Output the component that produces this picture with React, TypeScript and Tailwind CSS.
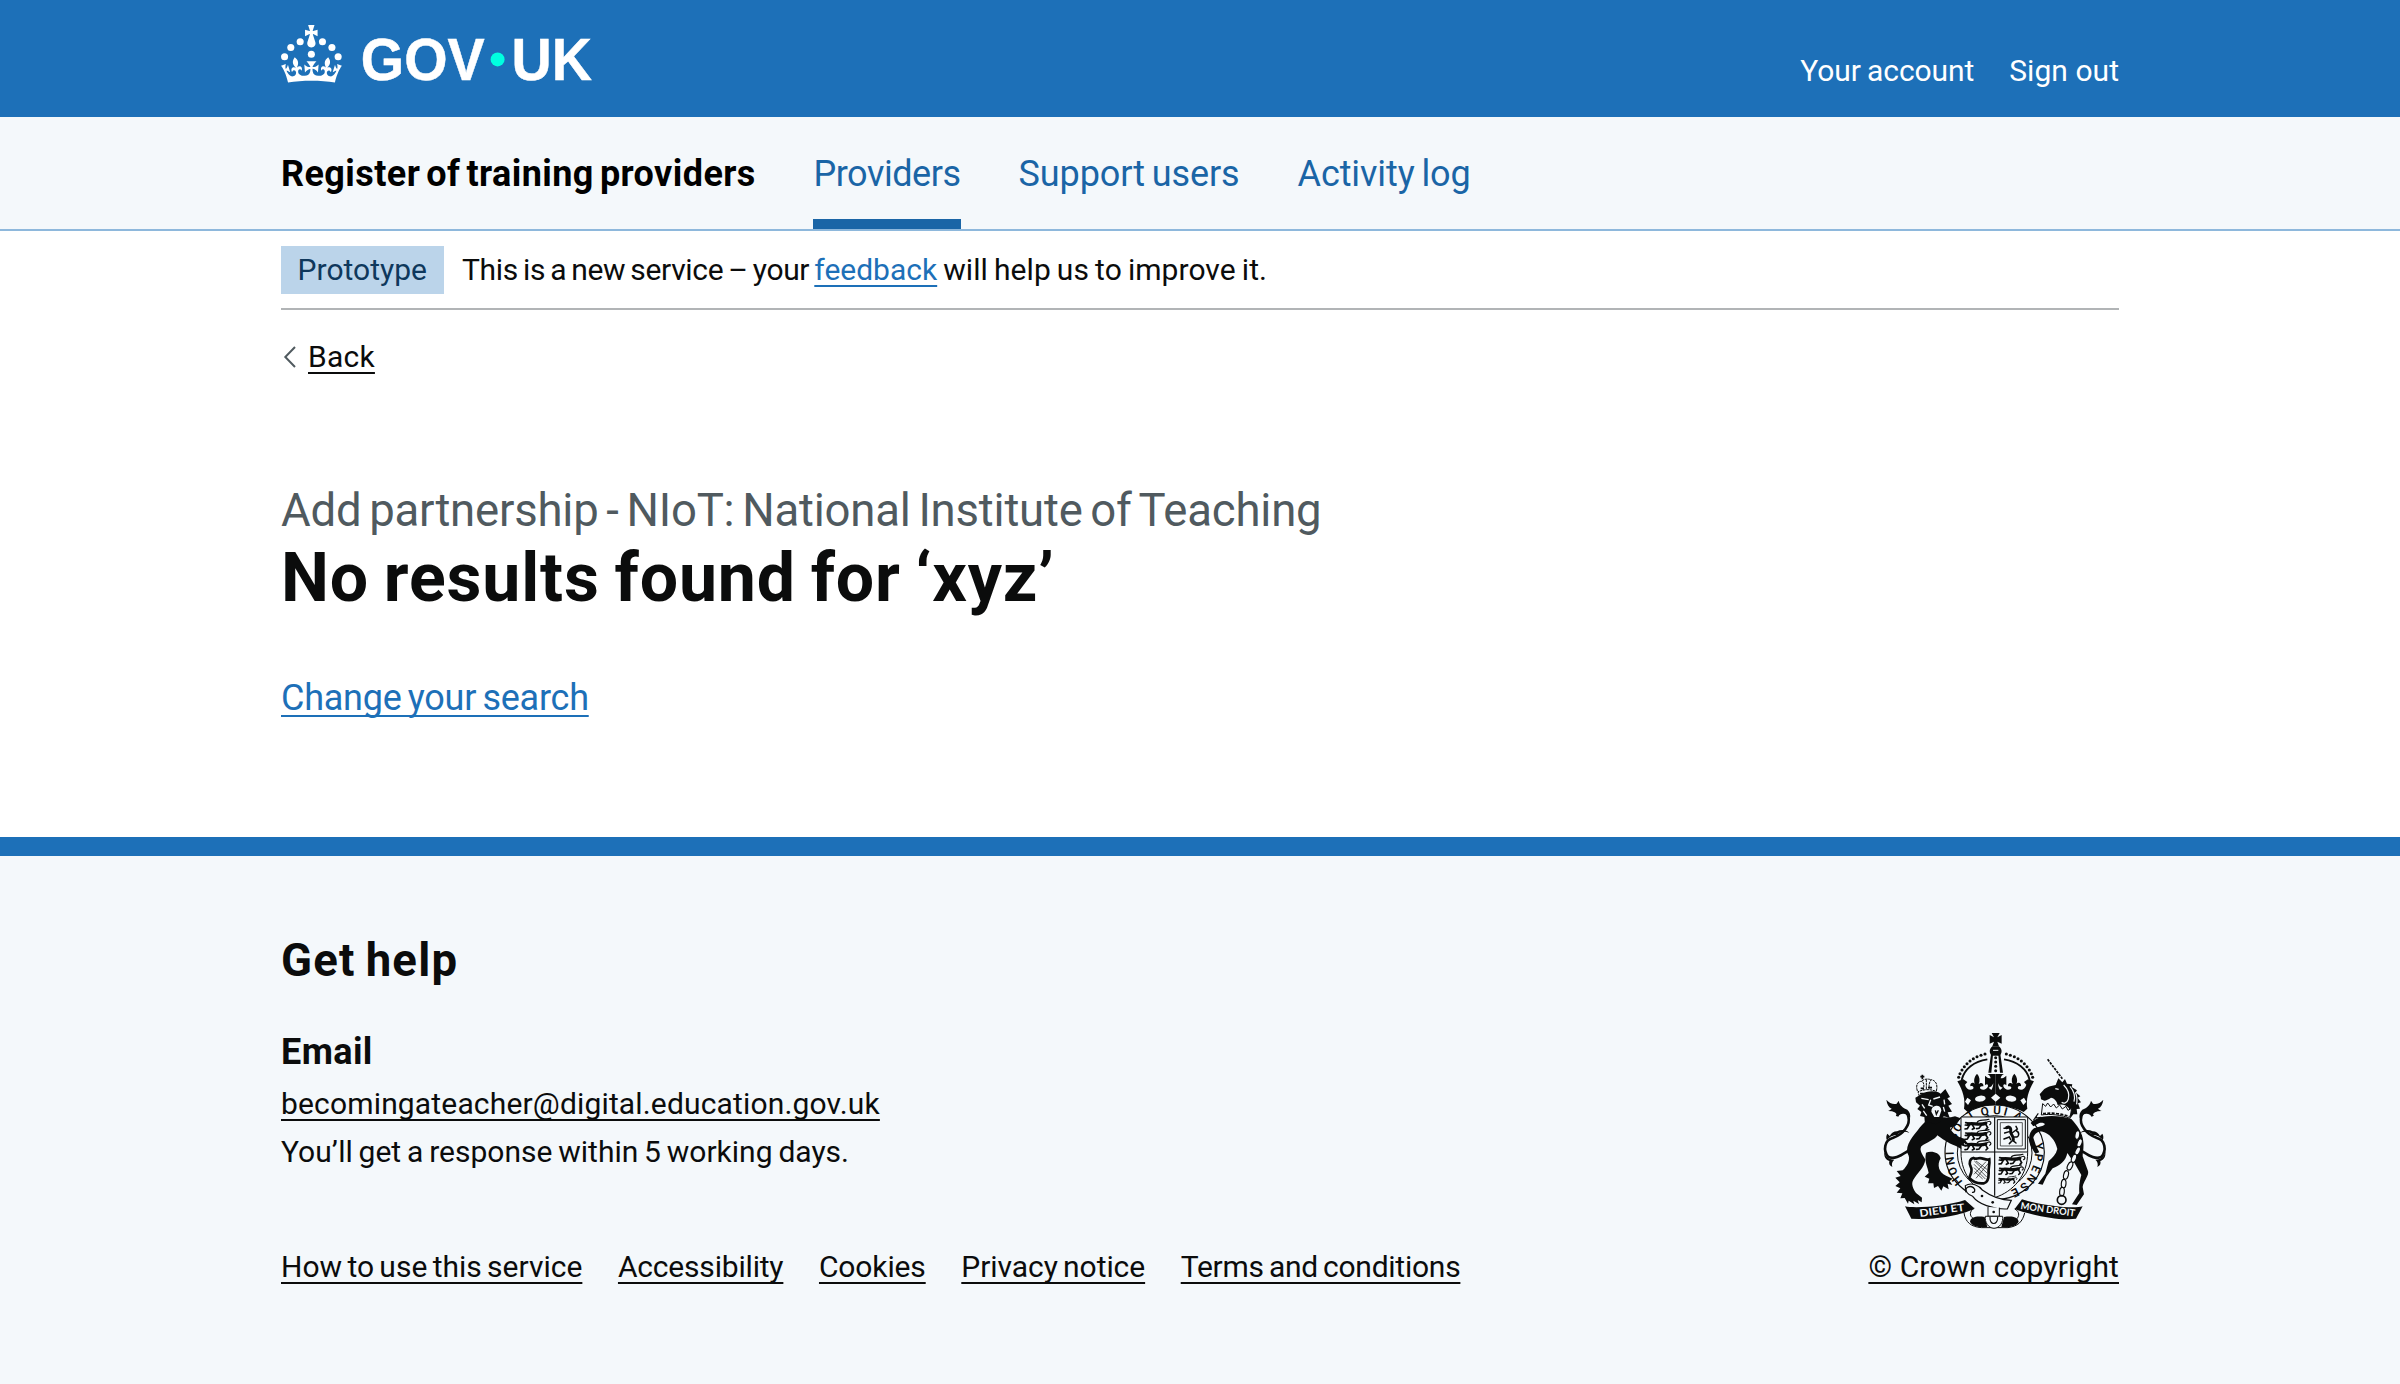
import type { ReactNode } from "react";

function Logo() {
  return (
    <svg viewBox="0 0 324 60" className="h-[57.4px] w-[310px] overflow-visible" fill="#fff" role="img" aria-label="GOV.UK">
      <circle cx="20" cy="17.6" r="3.7" />
      <circle cx="10.2" cy="23.5" r="3.7" />
      <circle cx="3.7" cy="33.2" r="3.7" />
      <circle cx="31.7" cy="30.6" r="3.7" />
      <circle cx="43.3" cy="17.6" r="3.7" />
      <circle cx="53.2" cy="23.5" r="3.7" />
      <circle cx="59.7" cy="33.2" r="3.7" />
      <path d="M33.1,9.8c.2-.1.3-.3.5-.5l4.6,2.4v-6.8l-4.6,1.5c-.1-.2-.3-.3-.5-.5l1.9-5.9h-6.7l1.9,5.9c-.2.1-.3.3-.5.5l-4.6-1.5v6.8l4.6-2.4c.1.2.3.3.5.5l-2.6,8c-.9,2.8,1.2,5.7,4.1,5.7h0c3,0,5.1-2.9,4.1-5.7l-2.6-8ZM37,37.9s-3.4,3.8-4.1,6.1c2.2,0,4.2-.5,6.4-2.8l-.7,8.5c-2-2.8-4.4-4.1-5.7-3.8.1,3.1.5,6.7,5.8,7.2,3.7.3,6.7-1.5,7-3.8.4-2.6-2-4.3-3.7-1.6-1.4-4.5,2.4-6.1,4.9-3.2-1.9-4.5-1.8-7.7,2.4-10.9,3,4,2.6,7.3-1.2,11.1,2.4-1.3,6.2,0,4,4.6-1.2-2.8-3.7-2.2-4.2.2-.3,1.7.7,3.7,3,4.2,1.9.3,4.7-.9,7-5.9-1.3,0-2.4.7-3.9,1.7l2.4-8c.6,2.3,1.4,3.7,2.2,4.5.6-1.6.5-2.8,0-5.3l5,1.8c-2.6,3.6-5.2,8.7-7.3,17.5-7.4-1.1-15.7-1.7-24.5-1.7h0c-8.8,0-17.1.6-24.5,1.7-2.1-8.9-4.7-13.9-7.3-17.5l5-1.8c-.5,2.5-.6,3.7,0,5.3.8-.8,1.6-2.3,2.2-4.5l2.4,8c-1.5-1-2.6-1.7-3.9-1.7,2.3,5,5.2,6.2,7,5.9,2.3-.4,3.3-2.4,3-4.2-.5-2.4-3-3.1-4.2-.2-2.2-4.6,1.6-6,4-4.6-3.7-3.7-4.2-7.1-1.2-11.1,4.2,3.2,4.3,6.4,2.4,10.9,2.5-2.8,6.3-1.3,4.9,3.2-1.8-2.7-4.1-1-3.7,1.6.3,2.3,3.3,4.1,7,3.8,5.4-.5,5.7-4.2,5.8-7.2-1.3-.2-3.7,1-5.7,3.8l-.7-8.5c2.2,2.3,4.2,2.7,6.4,2.8-.7-2.3-4.1-6.1-4.1-6.1h10.6,0Z" />
      <g stroke="#fff" strokeWidth="0.5" fontSize="62.2" fontWeight="700" fontFamily="Liberation Sans, sans-serif">
        <text x="83.4" y="57.7" textLength="129.5" lengthAdjust="spacingAndGlyphs">GOV</text>
        <text x="241" y="57.7" textLength="84" lengthAdjust="spacingAndGlyphs">UK</text>
      </g>
      <circle cx="226.4" cy="36" r="7.3" fill="#00ffe0" />
    </svg>
  );
}

// Letters of the garter motto: glyph, centre x, centre y.
const garter: [string, number, number][] = [
  ["H", 291, 516], ["O", 278, 487], ["N", 271, 456], ["I", 269, 433],
  ["S", 279, 382], ["O", 293, 355], ["T", 332, 318], ["Q", 374, 307],
  ["U", 411, 304], ["I", 437, 308], ["A", 474, 322], ["Y", 537, 412],
  ["P", 536, 445], ["E", 528, 480], ["N", 516, 509], ["S", 494, 534], ["E", 466, 551],
];

function Passant({ x, y, s = 1 }: { x: number; y: number; s?: number }) {
  return (
    <g transform={`translate(${x} ${y}) scale(${s})`} fill="none" stroke="#0b0c0c" strokeLinecap="round">
      <path d="M12 10C26 6 44 15 64 8" strokeWidth="10" />
      <path d="M4 6l12 2M3 13l10 1M16 12L9 24l-7 1M24 12l6 11-6 3M52 12l-8 11-7 1M63 9l7 12-5 5" strokeWidth="5" />
      <path d="M66 6C78-4 84 8 76 12M38 6C44-6 56 2 74-4" strokeWidth="3.5" />
    </g>
  );
}

function CrownHalf() {
  return (
    <g>
      {[[375, 135], [363, 139], [351, 143], [340, 149], [330, 156], [321, 164], [313, 173], [306, 183], [300, 194], [296, 205]].map(([x, y]) => (
        <circle key={x} cx={x} cy={y} r="4.6" />
      ))}
      <path d="M382 151C342 157 313 180 305 213" fill="none" stroke="#0b0c0c" strokeWidth="5.5" />
      <path d="M292 217l18-6 12 8-7 8c4 14 14 18 24 13 4-4 0-11-8-8-2-11 9-14 14-6-5-12-2-23 6-32 8 9 10 20 5 32 6-8 16-4 14 6-9-2-13 3-8 8 8 5 18 2 22-8 1-8-5-8-9-3v-29c5 5 10 8 17 8-1-5-4-11-10-13h25v97c-31 0-60 5-84 17l-11-10c5-26-3-54-20-82z" />
      <path d="M386 236c7-1 11-6 14-13-1 9-2 15-6 20z" fill="#f4f8fb" />
    </g>
  );
}

function Tail() {
  return (
    <g>
      <path d="M154 420C132 432 104 456 84 443C69 424 73 393 98 387C130 376 152 348 145 322C139 300 119 304 111 322" fill="none" stroke="#0b0c0c" strokeWidth="8" />
      <path d="M79 272c8 10 22 16 31 12l6-9c2 12 12 22 26 27 8 8 10 16 8 26-10-16-24-18-40-6 2-8-5-12-14-15l-12-1c6-3 9-5 11-7-9-4-14-13-16-27zM148 372c-12-6-30-4-36 6-13-1-26 7-31 16-4-8-2-15 1-20l7 7c5-9 12-14 22-14 12-6 28-5 37 5zM73 428c4 16 12 22 30 24-7 6-9 13-6 22-9-5-11-10-9-18-11-4-17-14-15-28z" />
    </g>
  );
}

function RoyalArms() {
  return (
    <svg viewBox="60 60 690 610" className="h-[203.3px] w-[230px]" fill="#0b0c0c" role="img" aria-label="Royal coat of arms">
      <path d="M395 72h24l-7 13 13-7v26l-13-6 5 14h-20l5-14-13 6V78l13 7z" />
      <path d="M397 112h20c11 9 9 21 2 28h-24c-7-7-9-19 2-28z" />
      <path d="M393 136l-8 55h9l5-54zM421 136l8 55h-9l-5-54z" />
      <path d="M399 124h16" stroke="#f4f8fb" strokeWidth="3" />
      {[146, 159, 172, 185].map((y) => <circle key={y} cx="407" cy={y} r="4.5" />)}
      <CrownHalf />
      <g transform="translate(814 0) scale(-1 1)"><CrownHalf /></g>
      <g fill="#f4f8fb">
        <path d="M407 254l14 12-14 12-14-12zM322 266l11 8-9 14-9-10zM492 266l-11 8 9 14 9-10z" />
        <ellipse cx="361" cy="269" rx="16" ry="9" transform="rotate(-8 361 269)" />
        <ellipse cx="453" cy="269" rx="16" ry="9" transform="rotate(8 453 269)" />
      </g>

      <Tail />
      <g transform="translate(809 0) scale(-1 1)"><Tail /></g>

      <ellipse cx="404" cy="430" rx="149" ry="142" fill="#f4f8fb" stroke="#0b0c0c" strokeWidth="3.5" />
      <ellipse cx="404" cy="432" rx="112" ry="112" fill="none" stroke="#0b0c0c" strokeWidth="3" />
      {garter.map(([ch, x, y], i) => (
        <text
          key={i}
          transform={`translate(${x} ${y}) rotate(${(Math.atan2(y - 430, x - 404) * 180) / Math.PI + 90})`}
          y="12"
          textAnchor="middle"
          fontSize="35"
          fontWeight="600"
          fontFamily="Roboto, sans-serif"
        >
          {ch}
        </text>
      ))}

      <path d="M303 324H503V430C503 500 460 548 404 566C348 548 303 500 303 430Z" fill="#f4f8fb" stroke="#0b0c0c" strokeWidth="3" />
      <path d="M404 324V560M303 429H503" stroke="#0b0c0c" strokeWidth="3.5" />
      <Passant x={313} y={335} />
      <Passant x={313} y={366} />
      <Passant x={313} y={397} />
      <Passant x={415} y={440} />
      <Passant x={415} y={472} s={0.94} />
      <Passant x={414} y={504} s={0.72} />
      <path d="M412 332h84v88h-84z" fill="none" stroke="#0b0c0c" strokeWidth="3" />
      <path d="M421 341h66v70h-66z" fill="none" stroke="#0b0c0c" strokeWidth="2" />
      <g fill="none" stroke="#0b0c0c" strokeLinecap="round">
        <path d="M440 356c10-5 14 4 12 12s10 12 8 24" strokeWidth="9" />
        <path d="M432 358l10 0M434 372l14-4M432 390l16-6 4 8M448 404l10-10 10 8M456 372l16-12-4-8M464 384c16 2 14-14 6-18" strokeWidth="4.5" />
      </g>
      <path d="M340 447c-10 2-14 14-8 26 8 14-2 24-4 34 10 12 26 18 44 16 10-2 14-14 14-30-2-14 4-26 2-42-12 4-20-6-32-3-6 2-10 2-16-1z" fill="none" stroke="#0b0c0c" strokeWidth="8" />
      <path d="M343 456l40 38M342 466l38 38M342 476l34 34M348 456l34 26M344 488l24 22M386 462l-38 46M378 458l-36 38" stroke="#0b0c0c" strokeWidth="2" />

      {/* Lion supporter */}
      <path d="M205 330C240 320 262 330 285 322L302 328 286 350 270 356C275 372 295 385 313 389L322 402 311 403 318 414 303 409 304 420 288 411C262 402 245 388 232 379C226 392 200 400 184 412C176 425 190 440 196 452C192 478 172 490 160 512C152 525 160 540 168 552L186 566 185 580 173 573 177 585 160 575 163 586 146 575 144 584 134 567 121 568 127 553 110 551 121 538 106 531 119 520 106 506 122 501 110 486 128 484C142 470 150 455 146 440C132 420 150 390 172 365C182 352 190 342 205 330Z" />
      <path d="M198 431C215 425 238 430 242 448C230 468 236 490 258 500L278 509 269 516 277 528 263 524 266 541 250 532 244 545 234 531 222 537 220 523 204 523 208 509 194 503 206 492C204 475 192 460 198 431Z" />
      <path d="M166 266l18-10c18-12 44-12 58-2l14-14 14 24-8 4 14 17-11 5 11 18-13 2 6 16-18-4-10 16-14 8-20-6-12 6-2-22-13-3 4-12-12-9 8-10-12-10z" />
      <g fill="none" stroke="#f4f8fb" strokeWidth="4">
        <path d="M184 268l22 4M220 270l20-6M212 272l-6 16 12 4M186 286l8 12M190 306l10 14M252 272l2 14M250 294l4 14" />
        <path d="M216 308c0-18 24-22 26-4l-6 18h-12z" fill="#f4f8fb" />
        <path d="M226 304l3 12 6-12" stroke="#0b0c0c" />
      </g>
      <g fill="none" stroke="#0b0c0c" strokeWidth="3">
        <path d="M178 262l-4-14c22-8 36-8 54-1l-2 12M172 246c-6-18 2-30 14-29 8 6 6 18 3 26M229 246c5-18-1-31-15-34-7 8-8 18-6 28M186 216c4-6 20-8 27-3M199 212v30" strokeDasharray="8 2" />
        <path d="M187 197v14M181 203h12" strokeWidth="5" />
        <path d="M182 238h10M204 236h12M180 254h44" strokeWidth="5" />
      </g>

      {/* Unicorn supporter */}
      <path d="M563 151l44 58" fill="none" stroke="#0b0c0c" strokeWidth="5" strokeDasharray="8 3" />
      <path d="M539 256l14-16c8-6 20-10 34-12l8-20 12 12 8-10 6 14 16 2-2 8 16 10-4 6 14 12-8 4 10 14-9 3 6 16-10 1 2 16-12 0-9 12-4-30c-8-10-20-14-34-10-2-12-10-20-20-22-8 5-14 8-20 9l-10-4-1-8z" />
      <g fill="none" stroke="#f4f8fb" strokeWidth="3.5">
        <path d="M586 239l10 2M611 228c14 14 18 28 14 42s-14 14-20 10M630 232c12 14 16 30 12 46M646 250c6 12 6 22 4 36" />
      </g>
      <path d="M548 284l9 8 6-10 9 12 9-9 8 12 10-9 8 12 11-8 6 12 11-6-5 30c-24-10-60-14-86-10z" fill="#f4f8fb" stroke="#0b0c0c" strokeWidth="3" />
      <path d="M549 314c26-4 56 0 80 9" fill="none" stroke="#0b0c0c" strokeWidth="5" strokeDasharray="9 4" />
      <path d="M549 323C575 318 612 322 634 330C650 348 668 370 670 398C672 420 668 430 668 442L684 486C688 500 670 516 668 534L672 556 650 588 636 586 658 552C656 530 660 512 664 498L640 456C630 444 628 440 622 432C618 456 598 470 578 478L560 502 548 527 534 524 556 494 566 456C578 446 588 436 592 420C586 392 566 372 548 368C534 366 524 374 520 386L528 410 538 430 526 434 512 412C504 390 506 370 522 358L549 350C560 346 552 340 538 342L520 352 512 342C520 332 536 326 549 323Z" />
      <g fill="none" stroke="#0b0c0c" strokeWidth="3.5">
        <path d="M535 313l-10 14 18-2 10 8M530 322l-10 12" />
        {[[652, 378, 10], [659, 402, 20], [653, 426, 25], [642, 448, 20], [630, 471, 25], [618, 498, 15], [611, 524, 5], [606, 548, 5]].map(([x, y, r]) => (
          <ellipse key={y} cx={x} cy={y} rx="7" ry="13" transform={`rotate(${r} ${x} ${y})`} fill="#f4f8fb" />
        ))}
        <circle cx="605" cy="573" r="13" strokeWidth="5" />
      </g>

      {/* Strap, scroll and buckle */}
      <path d="M135 592C165 599 260 592 315 573L343 598C325 614 235 632 176 630L154 629Z" />
      <path d="M668 592C640 601 545 590 486 571L464 600C500 614 575 632 626 631L648 629Z" />
      <path d="M312 612c4 28 22 42 52 44h80c30-4 44-18 50-44M343 598c-16 8-14 24-4 30M464 600c16 8 14 22 6 30" fill="none" stroke="#0b0c0c" strokeWidth="3" />
      <path d="M330 638c2-14 20-18 44-14l8 30c-26 2-46-2-52-16zM476 638c-2-14-20-18-44-14l-8 30c26 2 46-2 52-16z" />
      <path d="M316 530c18-12 42 0 52 14 22 16 52 30 86 30l-12 26c-44 2-88-16-104-38-14-4-24-16-22-32z" fill="#f4f8fb" stroke="#0b0c0c" strokeWidth="3.5" />
      <path d="M318 550c-4-14 10-22 22-14 8 6 4 16-4 14" fill="none" stroke="#0b0c0c" strokeWidth="4" />
      <circle cx="366" cy="561" r="4" /><circle cx="398" cy="580" r="4" />
      <path d="M384 594v28h34v-26" fill="#f4f8fb" stroke="#0b0c0c" strokeWidth="3" />
      <circle cx="401" cy="609" r="4" />
      <path d="M376 622h52c2 18-8 35-26 36-18-1-28-18-26-36z" fill="#f4f8fb" stroke="#0b0c0c" strokeWidth="3" />
      <path d="M390 624c-2 26 24 26 23 0" fill="none" stroke="#0b0c0c" strokeWidth="3.5" />
      <g fill="#f4f8fb" fontFamily="Lato, sans-serif" fontWeight="700" fontSize="31">
        <text transform="translate(180 624) rotate(-8)" textLength="136" lengthAdjust="spacingAndGlyphs">DIEU ET</text>
        <text transform="translate(481 600) rotate(8)" textLength="164" lengthAdjust="spacingAndGlyphs" fontSize="29">MON DROIT</text>
      </g>
    </svg>
  );
}

function Container({ children, className = "" }: { children: ReactNode; className?: string }) {
  return <div className={`mx-auto w-[1838px] ${className}`}>{children}</div>;
}

const link = "underline decoration-2 underline-offset-[5px] [text-decoration-skip-ink:none]";

const footerLinks = [
  { label: "How to use this service", tracking: "[word-spacing:-2.1px]" },
  { label: "Accessibility", tracking: "tracking-[-0.19px]" },
  { label: "Cookies", tracking: "tracking-[-0.13px]" },
  { label: "Privacy notice", tracking: "tracking-[-0.06px] [word-spacing:-2.1px]" },
  { label: "Terms and conditions", tracking: "tracking-[-0.25px] [word-spacing:-2.1px]" },
];

export default function App() {
  return (
    <div className="h-[1384px] overflow-hidden bg-[#f4f8fb] font-['Roboto',sans-serif] text-[30px] text-[#0b0c0c]">
      <header>
        <div className="h-[117px] bg-[#1d70b8] text-white">
          <Container className="flex justify-between">
            <div className="pt-[24.8px]"><Logo /></div>
            <nav className="flex gap-[35px] pt-[51px] leading-[40px]">
              <a className="tracking-[-0.1px] [word-spacing:-1px]">Your account</a>
              <a className="tracking-[0.05px]">Sign out</a>
            </nav>
          </Container>
        </div>
        <div className="h-[114px] border-b-2 border-[#8eb8dc]">
          <Container className="flex h-full gap-[58px] text-[36px] leading-[114px] whitespace-nowrap">
            <span className="w-[474.4px] font-bold tracking-[0.42px] text-black [word-spacing:-3.3px]">Register of training providers</span>
            <nav className="flex gap-[58px] text-[#1a65a6]">
              <a className="w-[147.2px] border-b-10 border-[#1a65a6] tracking-[-0.44px]">Providers</a>
              <a className="tracking-[-0.1px] [word-spacing:-2px]">Support users</a>
              <a className="tracking-[-0.1px] [word-spacing:-2px]">Activity log</a>
            </nav>
          </Container>
        </div>
      </header>

      <div className="bg-white">
        <Container>
          <div className="flex h-[79px] border-b-2 border-[#b1b4b6] pt-[15px] leading-[48px] whitespace-nowrap">
            <strong className="mr-[18.5px] h-[48px] w-[162.5px] bg-[#bbd4ea] text-center font-normal text-[#0f385c]">Prototype</strong>
            <p className="whitespace-pre">
              <span className="tracking-[-0.34px] [word-spacing:-2px]">This is a new service – your </span>
              <a className={`text-[#1d70b8] ${link}`}>feedback</a>
              <span className="tracking-[0.05px] [word-spacing:-1.4px]"> will help us to improve it.</span>
            </p>
          </div>
          <div className="flex items-center pt-[27px] leading-[40px]">
            <svg viewBox="0 0 27 24" className="h-[24px] w-[27px]" fill="none" stroke="#505a5f" strokeWidth="2">
              <path d="M14 2L4.3 12L14 22" />
            </svg>
            <a className={`tracking-[0.25px] ${link}`}>Back</a>
          </div>
          <main className="pt-[106px] pb-[116px]">
            <span className="block text-[45.5px] leading-[56px] tracking-[-0.2px] text-[#505a5f] [word-spacing:-3.3px]">Add partnership - NIoT: National Institute of Teaching</span>
            <h1 className="text-[68px] leading-[79px] font-bold tracking-[0.85px] [word-spacing:-3px]">No results found for ‘xyz’</h1>
            <p className="pt-[57px] text-[36px] leading-[46px]">
              <a className="tracking-[-0.25px] text-[#1d70b8] underline decoration-2 underline-offset-[5px] [text-decoration-skip-ink:none] [word-spacing:-2.4px]">Change your search</a>
            </p>
          </main>
        </Container>
      </div>

      <footer className="border-t-19 border-[#1d70b8]">
        <Container className="flex justify-between pt-[77px]">
          <div>
            <h2 className="text-[45.5px] leading-[56px] font-bold tracking-[1.2px] [word-spacing:-2.4px]">Get help</h2>
            <h3 className="pt-[40px] text-[36px] leading-[46px] font-bold tracking-[0.4px]">Email</h3>
            <p className="pt-[5px] leading-[48px]">
              <a className={`tracking-[0.16px] ${link}`}>becomingateacher@digital.education.gov.uk</a>
            </p>
            <p className="leading-[48px] [word-spacing:-1.6px]">You’ll get a response within 5 working days.</p>
            <ul className="flex gap-[35.6px] pt-[67px] leading-[48px]">
              {footerLinks.map(({ label, tracking }) => (
                <li key={label}>
                  <a className={`${tracking} ${link}`}>{label}</a>
                </li>
              ))}
            </ul>
          </div>
          <div className="flex flex-col items-end justify-end">
            <div className="mr-[9px] mb-[11px]"><RoyalArms /></div>
            <a className={`leading-[48px] tracking-[0.13px] ${link}`}>© Crown copyright</a>
          </div>
        </Container>
      </footer>
    </div>
  );
}
